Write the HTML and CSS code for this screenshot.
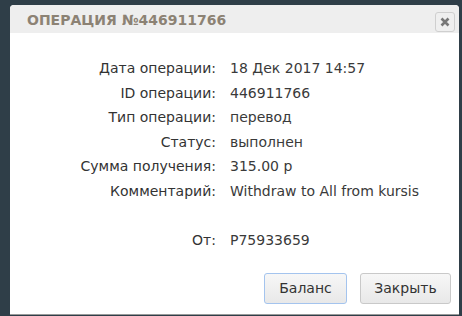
FILE: index.html
```html
<!DOCTYPE html>
<html lang="ru">
<head>
<meta charset="utf-8">
<link rel="stylesheet" href="styles.css">
</head>
<body>
<div class="dialog">
  <div class="header">
    <span class="title">Операция №446911766</span>
    <button class="close" type="button"><svg width="10" height="10" viewBox="0 0 10 10"><path d="M1.5 1.5 L8.5 8.5 M8.5 1.5 L1.5 8.5" stroke="#777" stroke-width="2.6" stroke-linecap="butt"/></svg></button>
  </div>
  <div class="content">
    <div class="rows">
      <div class="label">Дата операции:</div><div class="value">18 Дек 2017 14:57</div>
      <div class="label">ID операции:</div><div class="value">446911766</div>
      <div class="label">Тип операции:</div><div class="value">перевод</div>
      <div class="label">Статус:</div><div class="value">выполнен</div>
      <div class="label">Сумма получения:</div><div class="value">315.00 р</div>
      <div class="label">Комментарий:</div><div class="value">Withdraw to All from kursis</div>
      <div class="label empty">&nbsp;</div><div class="value empty">&nbsp;</div>
      <div class="label">От:</div><div class="value">P75933659</div>
    </div>
    <div class="footer">
      <button class="btn btn-primary" type="button">Баланс</button>
      <button class="btn btn-close" type="button">Закрыть</button>
    </div>
  </div>
</div>
</body>
</html>
```
FILE: styles.css
```css
html, body {
  margin: 0;
  padding: 0;
}
body {
  width: 462px;
  height: 316px;
  overflow: hidden;
  background: #2f3e48;
  font-family: "DejaVu Sans", Verdana, sans-serif;
}
.dialog {
  margin: 5px 0 0 10px;
  width: 449px;
  height: 310px;
  background: #fff;
  border-radius: 4px 4px 0 0;
  border-bottom: 1px solid #9a9a9a;
  box-sizing: border-box;
  display: flex;
  flex-direction: column;
}
.header {
  height: 28px;
  background: #eeeeee;
  border-radius: 4px 4px 0 0;
  display: flex;
  align-items: center;
  justify-content: space-between;
  padding: 0 4px 0 17px;
}
.title {
  text-transform: uppercase;
  color: #8c8274;
  font-size: 14px;
  font-weight: bold;
  letter-spacing: 0;
  margin-top: 1px;
}
.close {
  width: 20px;
  height: 20px;
  margin-top: 5px;
  padding: 0;
  border: 1px solid #cfcfcf;
  border-radius: 3px;
  background: #efefef;
  display: flex;
  align-items: center;
  justify-content: center;
}
.content {
  flex: 1;
  display: flex;
  flex-direction: column;
}
.rows {
  display: grid;
  grid-template-columns: 206px auto;
  column-gap: 14px;
  padding-top: 23px;
  font-size: 14px;
  color: #333;
  line-height: 24.6px;
}
.label {
  text-align: right;
}
.value {
  color: #3a3a3a;
}
.footer {
  display: flex;
  justify-content: flex-end;
  gap: 13px;
  padding: 20px 8px 0 0;
}
.btn {
  height: 31px;
  font-family: "DejaVu Sans", Verdana, sans-serif;
  font-size: 14px;
  color: #333;
  border: 1px solid #c9c9c9;
  border-radius: 3px;
  background: linear-gradient(#f7f7f7, #e8e8e8);
  padding: 0;
}
.btn-primary {
  border-color: #a4c4ee;
  width: 83px;
}
.btn-close {
  width: 91px;
}
```
